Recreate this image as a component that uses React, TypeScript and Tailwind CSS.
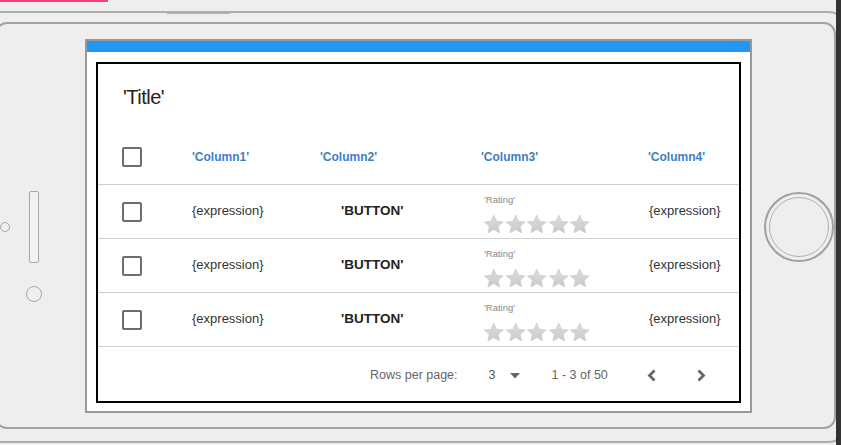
import React from 'react';

// ヘッダー列
const columns = ["'Column1'", "'Column2'", "'Column3'", "'Column4'"];
const rows = [1, 2, 3];

function Star() {
  return (
    <svg width="21.5" height="21" viewBox="0 0 24 24">
      <defs>
        <linearGradient id="starFill" x1="0" y1="0" x2="0" y2="1">
          <stop offset="0" stopColor="#dcdcdc" />
          <stop offset="1" stopColor="#cacaca" />
        </linearGradient>
      </defs>
      <path
        d="M12 1.2l3.2 7 7.6.8-5.7 5.1 1.6 7.6L12 17.8l-6.7 3.9 1.6-7.6-5.7-5.1 7.6-.8z"
        fill="url(#starFill)"
        stroke="#c2c2c2"
        strokeWidth="0.6"
        strokeLinejoin="round"
      />
    </svg>
  );
}

function Checkbox() {
  return <div className="w-[20px] h-[20px] border-2 border-[#6e6e6e] rounded-[2px]" />;
}

export default function App() {
  return (
    <div className="relative w-[841px] h-[445px] overflow-hidden bg-[#eeeeee] font-['Liberation_Sans',Arial,sans-serif] pt-[39px] pl-[85px]">
      {/* phone frame */}
      <div className="absolute left-0 top-0 w-[108px] h-[2px] bg-[#f43f7f]" />
      <div className="absolute -left-[20px] top-[11px] w-[870px] h-[432px] border-2 border-[#adadad] rounded-[22px]" />
      <div className="absolute left-[167px] top-[13px] w-[63px] h-[1px] bg-[#b5b5b5]" />
      <div className="absolute -left-[5px] top-[22px] w-[841px] h-[407px] border-2 border-[#a2a2a2] rounded-[12px]" />
      <div className="absolute left-0 top-[222px] w-[10px] h-[10px] border border-[#a8a8a8] rounded-full" />
      <div className="absolute left-[29px] top-[191px] w-[10px] h-[72px] border border-[#a8a8a8] rounded-[2px] bg-[#f2f2f2]" />
      <div className="absolute left-[26px] top-[286px] w-[16px] h-[16px] border border-[#a8a8a8] rounded-full" />
      <div className="absolute left-[764px] top-[192px] w-[70px] h-[70px] border-2 border-[#a0a0a0] rounded-full flex items-center justify-center">
        <div className="w-[60px] h-[60px] border border-[#b0b0b0] rounded-full" />
      </div>
      <div className="absolute right-0 top-0 w-[5px] h-full bg-[#333333]" />

      {/* screen */}
      <div className="relative w-[667px] h-[374px] border-2 border-[#999999] bg-white flex flex-col">
        <div className="h-[11px] bg-[#2196f3]" />
        <div className="flex-1 px-[9px] pt-[10px] pb-[8px]">
          <div className="h-full border-2 border-black flex flex-col">
            {/* title */}
            <div className="h-[66px] flex items-center pl-[25px] text-[20px] tracking-[-0.5px] text-[#222]">'Title'</div>

            {/* header */}
            <div className="h-[54px] grid grid-cols-[94px_128px_161px_167px_1fr] items-center">
              <div className="pl-[24px]">
                <Checkbox />
              </div>
              {columns.map((c) => (
                <div key={c} className="text-[12px] font-bold text-[#3d7fc1]">
                  {c}
                </div>
              ))}
            </div>

            {/* rows */}
            {rows.map((r) => (
              <div
                key={r}
                className="h-[54px] border-t border-[#cfcfcf] grid grid-cols-[94px_128px_161px_167px_1fr] items-center"
              >
                <div className="pl-[24px]">
                  <Checkbox />
                </div>
                <div className="text-[13px] text-[#333] -mt-[1px]">{'{expression}'}</div>
                <div className="pl-[21px] text-[13.5px] font-bold text-[#222]">'BUTTON'</div>
                <div className="self-start pt-[9px] pl-[2px]">
                  <div className="text-[9.5px] leading-[11px] text-[#8a8a8a] pl-[1px]">'Rating'</div>
                  <div className="flex mt-[9px]">
                    {[0, 1, 2, 3, 4].map((i) => (
                      <Star key={i} />
                    ))}
                  </div>
                </div>
                <div className="pl-[1px] text-[13px] text-[#333] -mt-[1px]">{'{expression}'}</div>
              </div>
            ))}

            {/* footer */}
            <div className="flex-1 border-t border-[#cfcfcf] flex items-center pt-[3px] pl-[272px] text-[12.5px] text-[#666]">
              <span>Rows per page:</span>
              <span className="ml-[31px] text-[#555]">3</span>
              <svg className="ml-[14px]" width="10" height="6" viewBox="0 0 10 6">
                <path d="M0 0h10L5 5.5z" fill="#666" />
              </svg>
              <span className="ml-[32px]">1 - 3 of 50</span>
              <svg className="ml-[38px]" width="11" height="13" viewBox="0 0 11 13">
                <path d="M8.5 1.5L3.5 6.5l5 5" fill="none" stroke="#666" strokeWidth="2.8" />
              </svg>
              <svg className="ml-[39px]" width="11" height="13" viewBox="0 0 11 13">
                <path d="M2.5 1.5l5 5-5 5" fill="none" stroke="#666" strokeWidth="2.8" />
              </svg>
            </div>
          </div>
        </div>
      </div>
    </div>
  );
}
